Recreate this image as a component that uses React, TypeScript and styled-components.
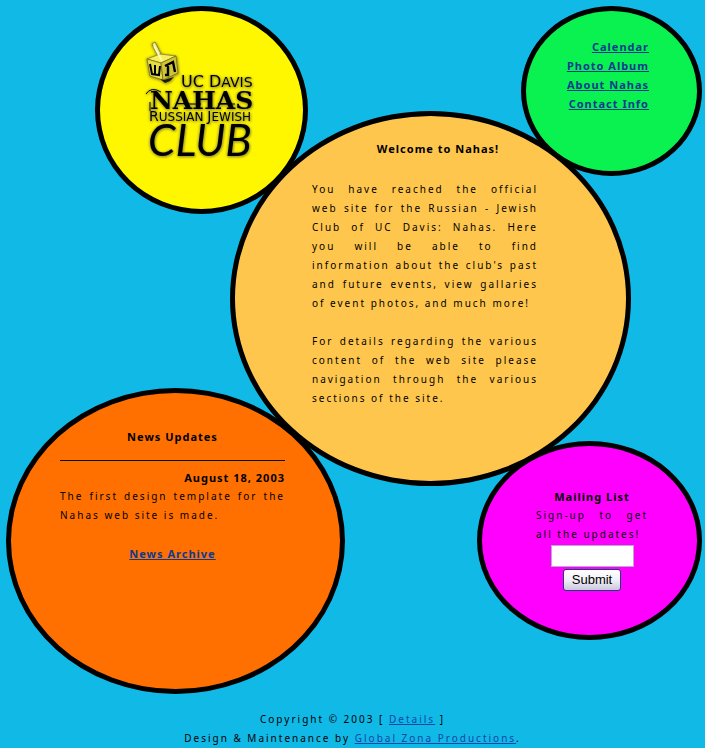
import React from "react";
import styled, { createGlobalStyle } from "styled-components";

const GlobalStyle = createGlobalStyle`
  *, *::before, *::after { box-sizing: border-box; }
  body {
    margin: 0;
    background: #11b9e7;
    color: #000;
    font: 10px/19px "Noto Sans", "Open Sans", sans-serif;
    letter-spacing: 2px;
  }
`;

const Page = styled.div`
  min-width: 700px;
`;

/* The bubbles share grid tracks so that neighbouring rims touch. */
const Bubbles = styled.main`
  display: grid;
  grid-template-columns: 89fr 135fr 78fr 37fr 132fr 44fr 110fr 71fr;
  grid-template-rows: 105px 65px 38px 174px 53px 45px 154px 54px;
  padding: 6px 3px 0 6px;
`;

const Bubble = styled.section<{ $area: string; $fill: string; $pad: string }>`
  grid-area: ${(p) => p.$area};
  background: ${(p) => p.$fill};
  padding: ${(p) => p.$pad};
  border: 5px solid #000;
  border-radius: 50%;
`;

const Title = styled.h2`
  margin: 0;
  font: 700 11px/19px "Noto Sans", sans-serif;
  letter-spacing: 1px;
  text-align: center;
`;

const WelcomeTitle = styled(Title)`
  margin-bottom: 22px;
`;

const Copy = styled.p`
  margin: 0 0 19px;
  max-width: 226px;
  text-align: justify;
`;

const FieldLabel = styled.label`
  display: block;
  text-align: justify;
`;

const Link = styled.a`
  color: #0f46a8;
`;

const BoldLink = styled.a`
  color: #0b3a91;
  font: 700 11px/19px "Noto Sans", sans-serif;
  letter-spacing: 1px;
`;

const Nav = styled.nav`
  display: flex;
  flex-direction: column;
  align-items: flex-end;
`;

const Rule = styled.hr`
  margin: 14px 0 7px;
  border: 0;
  border-top: 1px solid #000;
`;

const NewsDate = styled.time`
  display: block;
  font: 700 11px/19px "Noto Sans", sans-serif;
  letter-spacing: 1px;
  text-align: right;
`;

const Centered = styled.div`
  text-align: center;
`;

const SignUp = styled.form`
  display: flex;
  flex-direction: column;
  align-items: center;
  gap: 2px;
  padding-top: 1px;
`;

const EmailInput = styled.input`
  width: 83px;
  height: 22px;
  border: 1px solid #b9a9cf;
  background: #fff;
`;

const SubmitButton = styled.button`
  height: 22px;
  padding: 0 8px;
  border: 1px solid #1c3f7c;
  border-radius: 3px;
  background: linear-gradient(#fff, #f0f0f8 50%, #c8c8dc);
  color: #000;
  font: 13px/18px "Liberation Sans", Arial, sans-serif;
`;

const Footer = styled.footer`
  padding-top: 16px;
  text-align: center;
`;

const LogoArt = styled.svg`
  display: block;
  filter: drop-shadow(1px 1px 1px #a39c20) drop-shadow(-1px 0 1px #b5ae20);
  letter-spacing: 0;
`;

function Logo() {
  return (
    <LogoArt width="116" height="136" viewBox="0 0 116 136" role="img" aria-label="UC Davis Nahas Russian Jewish Club">
      <path d="M7 6 L10 4 L18 20 L15 22Z" fill="#f4ef86" stroke="#7d7720" strokeWidth="0.8" />
      <path d="M2 21 L15 16 L31 18 L16 25Z" fill="#f7f05b" stroke="#8a8428" strokeWidth="0.8" />
      <path d="M2 21 L16 25 L18 42 L5 38Z" fill="#e6dc45" stroke="#77701a" strokeWidth="0.8" />
      <path d="M16 25 L31 18 L33 35 L18 42Z" fill="#cfc536" stroke="#77701a" strokeWidth="0.8" />
      <path d="M15 41 L19 42 L29 39 L25 43 L20 45Z" fill="#1b1902" />
      <path d="M9 8 L17 23" stroke="#fffbc0" strokeWidth="1.6" />
      <path d="M5 26 L7 36 L14 37 L15 28 M10 27 L10 36" fill="none" stroke="#000" strokeWidth="2" />
      <path d="M20 28 L28 24 L30 34 M23 28 L23 37 L20 37" fill="none" stroke="#000" strokeWidth="2.4" />
      <path d="M1 56 Q6 48 16 54 M5 64 V73 M39 66 H56 M73 66 H90" fill="none" stroke="#000" strokeWidth="1" />
      <g fill="#000">
        <g fontFamily="DejaVu Sans, sans-serif">
          <text x="36" y="49" fontSize="16">UC D<tspan fontSize="14">AVIS</tspan></text>
          <text x="4" y="83" fontSize="14">R<tspan fontSize="12">USSIAN </tspan>J<tspan fontSize="12">EWISH</tspan></text>
        </g>
        <text x="5" y="71" fontFamily="DejaVu Serif, serif" fontWeight="700" fontSize="25">NAHAS</text>
        <text x="3" y="118" fontFamily="Lato, sans-serif" fontStyle="italic" fontWeight="400" fontSize="44">CLUB</text>
      </g>
    </LogoArt>
  );
}

const navItems = ["Calendar", "Photo Album", "About Nahas", "Contact Info"];

export default function App() {
  return (
    <Page>
      <GlobalStyle />
      <Bubbles>
        <Bubble $area="1 / 2 / 4 / 4" $fill="#fff700" $pad="27px 45px">
          <Logo />
        </Bubble>
        <Bubble $area="1 / 7 / 3 / 9" $fill="#0af24f" $pad="26px 48px 0 0">
          <Nav>
            {navItems.map((item) => (
              <BoldLink key={item} href="#">{item}</BoldLink>
            ))}
          </Nav>
        </Bubble>
        <Bubble $area="2 / 3 / 7 / 8" $fill="#ffc64d" $pad="23px 62px 0 77px">
          <WelcomeTitle>Welcome to Nahas!</WelcomeTitle>
          <Copy>
            You have reached the official web&nbsp;site for the Russian - Jewish Club of UC Davis:
            Nahas. Here you&nbsp;will&nbsp;be able to find information&nbsp;about the club's past
            and&nbsp;future events, view gallaries of&nbsp;event photos, and much more!
          </Copy>
          <Copy>
            For details regarding the various content of the web site please navigation through the
            various sections of the site.
          </Copy>
        </Bubble>
        <Bubble $area="5 / 1 / 9 / 5" $fill="#ff7000" $pad="34px 55px 0 49px">
          <Title>News Updates</Title>
          <Rule />
          <NewsDate dateTime="2003-08-18">August 18, 2003</NewsDate>
          <Copy>The first design template for the Nahas web site is made.</Copy>
          <Centered>
            <BoldLink href="#">News Archive</BoldLink>
          </Centered>
        </Bubble>
        <Bubble $area="6 / 6 / 8 / 9" $fill="#ff00ff" $pad="41px 49px 0 54px">
          <Title>Mailing List</Title>
          <FieldLabel htmlFor="email">Sign-up to get all the updates!</FieldLabel>
          <SignUp onSubmit={(e) => e.preventDefault()}>
            <EmailInput id="email" type="text" />
            <SubmitButton type="submit">Submit</SubmitButton>
          </SignUp>
        </Bubble>
      </Bubbles>
      <Footer>
        <div>Copyright © 2003 [ <Link href="#">Details</Link> ]</div>
        <div>Design &amp; Maintenance by <Link href="#">Global Zona Productions</Link>.</div>
      </Footer>
    </Page>
  );
}
